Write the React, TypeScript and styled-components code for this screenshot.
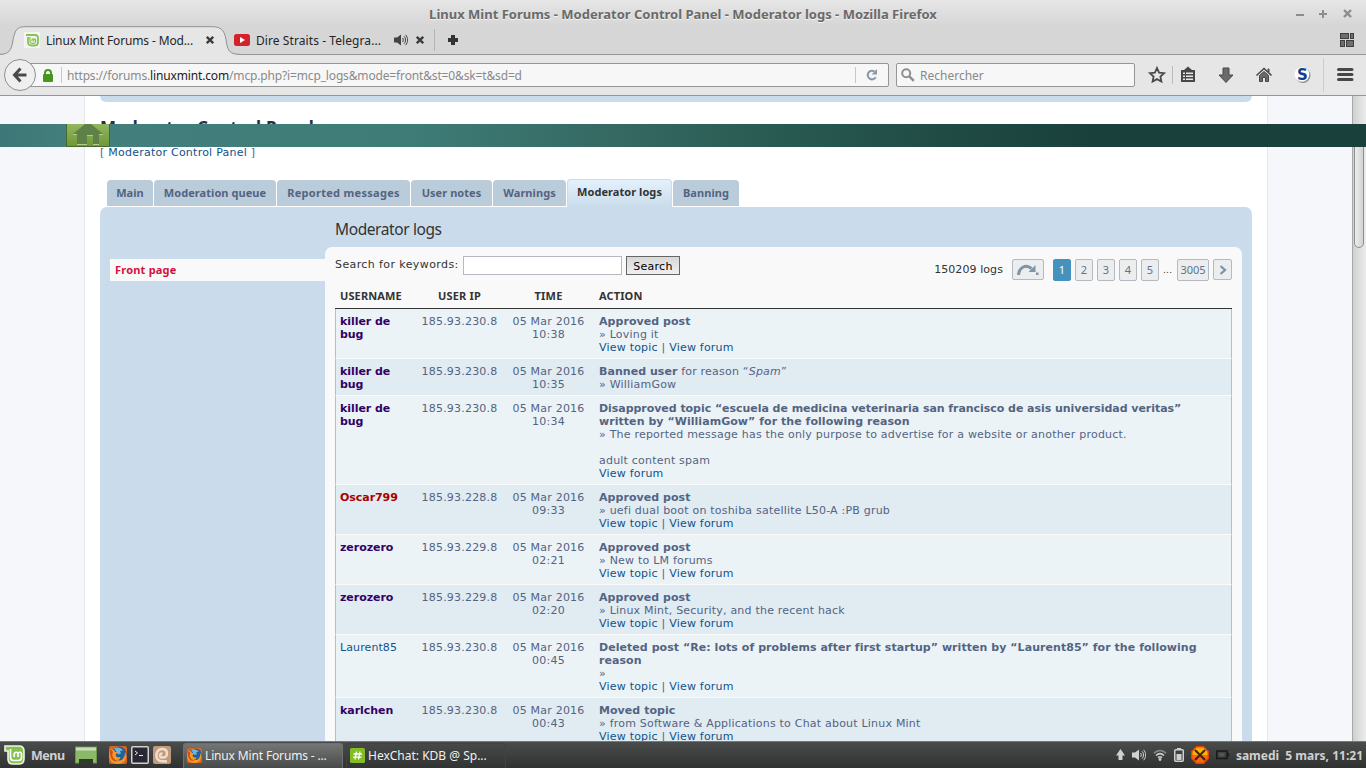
import React from "react"
import styled, { createGlobalStyle } from "styled-components"

interface LogEntry {
  user: string
  color: string
  plain?: boolean
  ip: string
  time: string
  action: React.ReactNode
}

const Link = styled.a`
  color: #105289;
`

const both = (
  <>
    <Link>View topic</Link> | <Link>View forum</Link>
  </>
)

const tabs = [
  { label: "Main", width: 46 },
  { label: "Moderation queue", width: 122 },
  { label: "Reported messages", width: 133, wide: true },
  { label: "User notes", width: 81 },
  { label: "Warnings", width: 73 },
  { label: "Moderator logs", width: 105, active: true },
  { label: "Banning", width: 66 },
]

const logs: LogEntry[] = [
  {
    user: "killer de bug", color: "#330066", ip: "185.93.230.8", time: "10:38",
    action: <><b>Approved post</b><br />» Loving it<br />{both}</>,
  },
  {
    user: "killer de bug", color: "#330066", ip: "185.93.230.8", time: "10:35",
    action: <><b>Banned user</b> for reason “<em>Spam</em>”<br />» WilliamGow</>,
  },
  {
    user: "killer de bug", color: "#330066", ip: "185.93.230.8", time: "10:34",
    action: (
      <>
        <TightBold>Disapproved topic “escuela de medicina veterinaria san francisco de asis universidad veritas”</TightBold><br />
        <b>written by “WilliamGow” for the following reason</b><br />
        » The reported message has the only purpose to advertise for a website or another product.<br />
        <br />
        adult content spam<br />
        <Link>View forum</Link>
      </>
    ),
  },
  {
    user: "Oscar799", color: "#aa0000", ip: "185.93.228.8", time: "09:33",
    action: <><b>Approved post</b><br />» uefi dual boot on toshiba satellite L50-A :PB grub<br />{both}</>,
  },
  {
    user: "zerozero", color: "#330066", ip: "185.93.229.8", time: "02:21",
    action: <><b>Approved post</b><br />» New to LM forums<br />{both}</>,
  },
  {
    user: "zerozero", color: "#330066", ip: "185.93.229.8", time: "02:20",
    action: <><b>Approved post</b><br />» Linux Mint, Security, and the recent hack<br />{both}</>,
  },
  {
    user: "Laurent85", color: "#105289", plain: true, ip: "185.93.230.8", time: "00:45",
    action: (
      <>
        <b>Deleted post “Re: lots of problems after first startup” written by “Laurent85” for the following<br />reason</b><br />
        »<br />
        {both}
      </>
    ),
  },
  {
    user: "karlchen", color: "#330066", ip: "185.93.230.8", time: "00:43",
    action: <><b>Moved topic</b><br />» from Software &amp; Applications to Chat about Linux Mint<br />{both}</>,
  },
]

// function declaration, so the log data above can use it
function TightBold({ children }: { children: React.ReactNode }) {
  return <Tight>{children}</Tight>
}

export default function App() {
  return (
    <Screen>
      <GlobalStyle />
      <TitleBar>
        <WindowTitle>Linux Mint Forums - Moderator Control Panel - Moderator logs - Mozilla Firefox</WindowTitle>
        <WindowButtons>
          <svg width="60" height="12" viewBox="0 0 60 12" fill="none" stroke="#8c8c8c" strokeWidth="2">
            <path d="M1 7h8M24 6h8M28 2v8" />
            <path d="M49 2l7 7M56 2l-7 7" strokeWidth="2.4" />
          </svg>
        </WindowButtons>
      </TitleBar>
      <BrowserTabs>
        <ActiveTab>
          <TabShape />
          <MintFavicon />
          <TabText $w={147} $tight>Linux Mint Forums - Mod...</TabText>
          <CloseIcon />
        </ActiveTab>
        <InactiveTab>
          <svg width="16" height="12" viewBox="0 0 16 12">
            <rect width="16" height="12" rx="2.5" fill="#d3222a" />
            <path d="M6 3l5 3-5 3z" fill="#fff" />
          </svg>
          <TabText $w={128}>Dire Straits - Telegra...</TabText>
          <SpeakerIcon color="#444" />
          <CloseIcon />
        </InactiveTab>
        <NewTab>
          <svg width="10" height="10" viewBox="0 0 10 10"><path d="M3 0h4v3h3v4H7v3H3V7H0V3h3z" fill="#333" /></svg>
        </NewTab>
        <TabGroups>
          <svg width="14" height="14" viewBox="0 0 14 14" fill="#6e6e6e" stroke="#3f3f3f">
            <rect x=".5" y=".5" width="8" height="5" />
            <rect x="10.5" y=".5" width="3" height="5" />
            <rect x=".5" y="7.5" width="4" height="6" />
            <rect x="6.5" y="7.5" width="7" height="6" />
          </svg>
        </TabGroups>
      </BrowserTabs>
      <NavBar>
        <BackButton>
          <svg width="16" height="16" viewBox="0 0 16 16" fill="none" stroke="#4a4a4a" strokeWidth="3">
            <path d="M8.500 1.500L2.500 8l6 6.500M3 8h11.500" />
          </svg>
        </BackButton>
        <UrlBar>
          <svg width="10" height="13" viewBox="0 0 10 13">
            <path d="M2 6V4a3 3 0 0 1 6 0v2" fill="none" stroke="#479622" strokeWidth="2" />
            <rect y="5" width="10" height="8" rx="1" fill="#479622" />
          </svg>
          <Divider />
          <Url>https://forums.<span>linuxmint.com</span>/mcp.php?i=mcp_logs&amp;mode=front&amp;st=0&amp;sk=t&amp;sd=d</Url>
          <Divider />
          <Reload>
            <svg width="12" height="12" viewBox="0 0 12 12">
              <path d="M9.700 8.300A4.300 4.300 0 1 1 8.500 2.500" fill="none" stroke="#8b99a6" strokeWidth="2.100" />
              <path d="M11 0v5.500H5.500z" fill="#8b99a6" />
            </svg>
          </Reload>
        </UrlBar>
        <SearchBar>
          <svg width="14" height="14" viewBox="0 0 14 14" fill="none" stroke="#8f8f8f">
            <circle cx="5.200" cy="5.200" r="4" strokeWidth="2" />
            <path d="M8.300 8.300l4.500 4.500" strokeWidth="2.500" />
          </svg>
          <SearchHint>Rechercher</SearchHint>
        </SearchBar>
        <Toolbar>
          <svg width="212" height="40" viewBox="0 0 212 40">
            <path d="M15 13l2.100 4.600 5 .600-3.700 3.400 1 5-4.400-2.500-4.400 2.500 1-5-3.700-3.400 5-.600z" fill="none" stroke="#4a4a4a" strokeWidth="1.800" />
            <path d="M30.500 11v18" stroke="#bcbcbc" />
            <path d="M39 15h3l4-3.500 4 3.500h3v12H39z" fill="#484848" />
            <path d="M41 17.500h2v1.500h-2zM44 17.500h7v1.500h-7zM41 20.500h2V22h-2zM44 20.500h7V22h-7zM41 23.500h2V25h-2zM44 23.500h7V25h-7z" fill="#e6e6e6" />
            <path d="M81 13h6v7h4L84 27.500 77 20h4z" fill="#6a6a6a" stroke="#484848" />
            <path d="M114.500 20.500l7.500-7 7.500 7" fill="none" stroke="#484848" strokeWidth="1.600" />
            <path d="M117.500 20.500l4.500-4 4.500 4V26.500h-3v-4h-3v4h-3zM126 14h1v3l-1-1z" fill="#6a6a6a" stroke="#484848" />
            <circle cx="161" cy="20.500" r="7.500" fill="#8d8d8d" />
            <circle cx="160" cy="19.500" r="7.300" fill="#fff" />
            <path d="M181.500 3v34" stroke="#cdcdcd" />
            <path d="M196.500 14.500h13.500M196.500 19.500h13.500M196.500 24.500h13.500" stroke="#484848" strokeWidth="3" strokeLinecap="round" />
          </svg>
          <ExtensionLetter>S</ExtensionLetter>
        </Toolbar>
      </NavBar>

      <Viewport>
        <Page>
          <PreviousPanel />
          <PageTitle>Moderator Control Panel</PageTitle>
          <Crumbs>[ <Link>Moderator Control Panel</Link> ]</Crumbs>
          <ForumTabs>
            {tabs.map(t => (
              <ForumTab key={t.label} $w={t.width} $active={t.active} $wide={t.wide}>{t.label}</ForumTab>
            ))}
          </ForumTabs>
          <Panel>
            <SideMenu>
              <SideItem>Front page</SideItem>
            </SideMenu>
            <Main>
              <PanelTitle>Moderator logs</PanelTitle>
              <Content>
                <ActionBar>
                  <Keywords>
                    <Label>Search for keywords:</Label>
                    <Input />
                    <SearchButton>Search</SearchButton>
                  </Keywords>
                  <Pagination>
                    <Total>150209 logs</Total>
                    <PageButton $w={32} $icon $gap={9}>
                      <svg width="22" height="12" viewBox="0 0 22 12">
                        <path d="M1.500 11C2 4 8.500-.500 14.500 4.500" fill="none" stroke="#7f94a6" strokeWidth="3" />
                        <path d="M18.500 1v7h-7zM19 8.500h2.500V11H19z" fill="#7f94a6" />
                      </svg>
                    </PageButton>
                    <PageButton $w={18} $current>1</PageButton>
                    <PageButton $w={18}>2</PageButton>
                    <PageButton $w={18}>3</PageButton>
                    <PageButton $w={18}>4</PageButton>
                    <PageButton $w={18}>5</PageButton>
                    <Dots>...</Dots>
                    <PageButton $w={32}>3005</PageButton>
                    <PageButton $w={19} $icon $gap={0}>
                      <svg width="8" height="10" viewBox="0 0 8 10"><path d="M1.500 1l4.500 4-4.500 4" fill="none" stroke="#7f94a6" strokeWidth="2.300" /></svg>
                    </PageButton>
                  </Pagination>
                </ActionBar>
                <Table>
                  <colgroup>
                    <col width="81" /><col width="87" /><col width="91" /><col />
                  </colgroup>
                  <thead>
                    <tr><Th>USERNAME</Th><Th $center>USER IP</Th><Th $center>TIME</Th><Th>ACTION</Th></tr>
                  </thead>
                  <tbody>
                    {logs.map((log, i) => (
                      <Row key={i} $odd={i % 2 === 0}>
                        <Td><User $color={log.color} $plain={log.plain}>{log.user}</User></Td>
                        <Td $center>{log.ip}</Td>
                        <Td $center $nowrap>05 Mar 2016<br />{log.time}</Td>
                        <Td $nowrap>{log.action}</Td>
                      </Row>
                    ))}
                  </tbody>
                </Table>
              </Content>
            </Main>
          </Panel>
        </Page>
        <Scrollbar><Thumb /></Scrollbar>
        <Banner>
          <HomeTile>
            <svg width="30" height="21" viewBox="0 0 30 21">
              <path d="M0 10L12 0h6l12 10h-4v10.500h-6V11h-6v9.500H4V10z" fill="#5e8148" />
              <path d="M0 10.500h4M26 10.500h4M14 11.500h6M4 20.500h10M20 20.500h6" stroke="#b4cb90" />
            </svg>
          </HomeTile>
        </Banner>
      </Viewport>

      <Taskbar>
        <MenuButton>
          <svg width="22" height="20" viewBox="0 0 22 20">
            <path d="M1 1h14c4 0 5 2 5 5v8c0 3-2 5-5 5H9c-4 0-5-2-5-5V6H1z" fill="#86c34e" stroke="#eef6e8" strokeWidth="1.600" />
            <path d="M6.500 4v8.500c0 2 1 3 3 3h5c2 0 3-1 3-3V9.500c0-3-3.500-3-3.500 0V12M14 9.500c0-3-3.800-3-3.800 0V12" fill="none" stroke="#fff" strokeWidth="1.700" />
          </svg>
          <MenuText>Menu</MenuText>
        </MenuButton>
        <Launchers>
          <svg width="22" height="19" viewBox="0 0 22 19">
            <rect x=".5" y="1" width="21" height="16" fill="#8bb968" stroke="#6c9650" />
            <path d="M1 1.500h20v3H1z" fill="#c9deb9" />
            <path d="M4 13h14v5H4z" fill="#2f3a29" />
          </svg>
          <FirefoxIcon size={18} />
          <svg width="18" height="18" viewBox="0 0 18 18">
            <rect x=".75" y=".75" width="16.500" height="16.500" rx="1" fill="#292733" stroke="#d0d0d0" strokeWidth="1.500" />
            <path d="M4 5l2.500 2L4 9M8 9.500h4" fill="none" stroke="#eee" />
          </svg>
          <svg width="18" height="18" viewBox="0 0 18 18">
            <rect width="18" height="18" rx="2" fill="#c09a79" />
            <path d="M14 15.500L7 15C1 12 3 3 9.500 3c5.500 0 6 8 1 8.500C6 12 6 7 9.500 7.500" fill="none" stroke="#f0dccb" strokeWidth="2.600" />
          </svg>
        </Launchers>
        <Task $active>
          <FirefoxIcon size={15} />
          <TaskText $tight>Linux Mint Forums - ...</TaskText>
        </Task>
        <Task>
          <svg width="15" height="15" viewBox="0 0 15 15">
            <rect width="15" height="15" rx="1.500" fill="#83bd24" />
            <path d="M6.500 3.500l-1.500 8M10 3.500l-1.500 8M3.500 6h8.500M3 9.200h8.500" stroke="#fff" strokeWidth="1.300" />
          </svg>
          <TaskText>HexChat: KDB @ Sp...</TaskText>
        </Task>
        <Tray>
          <svg width="9" height="12" viewBox="0 0 9 12"><path d="M4.500 0L9 6.500H6.500V11h-4V6.500H0z" fill="#d0d0d0" /></svg>
          <SpeakerIcon color="#d0d0d0" />
          <svg width="14" height="12" viewBox="0 0 14 12" fill="none" stroke="#cfcfcf" strokeWidth="1.500">
            <path d="M1 4.200C4.500.500 9.500.500 13 4.200" stroke="#8c8c8c" />
            <path d="M3 6.500c2.500-2.500 5.500-2.500 8 0M5 8.700c1.200-1.200 2.800-1.200 4 0" />
            <circle cx="7" cy="10.500" r=".7" fill="#cfcfcf" />
          </svg>
          <svg width="10" height="14" viewBox="0 0 10 14">
            <path d="M3 0h4v2H3z" fill="#d0d0d0" /><rect x=".75" y="1.750" width="8.500" height="11.500" rx="1" fill="none" stroke="#d0d0d0" strokeWidth="1.500" />
            <path d="M2.500 6h5v6h-5z" fill="#d0d0d0" />
          </svg>
          <svg width="18" height="18" viewBox="0 0 18 18">
            <path d="M5.500.8h7L17.200 5.500v7l-4.700 4.700h-7L.8 12.500v-7z" fill="#f7b500" />
            <path d="M1 9h16v3.500l-4.500 4.700h-7L1 12.500z" fill="#f26a12" />
            <path d="M5.500.8h7L17.200 5.500v7l-4.700 4.700h-7L.8 12.500v-7z" fill="none" stroke="#e8420d" strokeWidth="1.400" />
            <path d="M4 4l10 10M14 4L4 14" stroke="#4a1a0c" strokeWidth="2" />
          </svg>
          <svg width="13" height="10" viewBox="0 0 13 10">
            <path d="M.7 1h10.300v7.500H.7zM12.500 3v3.500" fill="none" stroke="#191919" strokeWidth="1.400" /><path d="M3 3h5.500v3.500H3z" fill="#555" />
          </svg>
          <Clock>samedi&nbsp; 5 mars, 11:21</Clock>
        </Tray>
      </Taskbar>
    </Screen>
  )
}

function TabShape() {
  return (
    <Shape width="244" height="29" viewBox="0 0 244 29">
      <path d="M0 28.500C9 28.500 11 24 12.500 17C14.500 6 15.500.700 25 .700H212C223 .700 225 6 226.500 17C228 25 230 28.500 240 28.500V29H0z" fill="#e6e6e6" />
      <path d="M0 28.300C9 28.300 11 24 12.500 17C14.500 6 15.500.700 25 .700H212C223 .700 225 6 226.500 17C228 25 230 28.300 240 28.300" fill="none" stroke="#8f9397" />
    </Shape>
  )
}

function MintFavicon() {
  return (
    <svg width="16" height="16" viewBox="0 0 16 16">
      <rect width="16" height="16" fill="#f4f4f4" />
      <path d="M2 3h9c2 0 3 1 3 3v4c0 2-1 3.500-3 3.500H7.500C5 13.500 4 12 4 10V5" fill="none" stroke="#86c34e" strokeWidth="1.800" />
      <path d="M6 5v4.500c0 1.300.6 1.800 1.800 1.800h2c1.200 0 1.800-.6 1.800-1.800V8c0-1.500-1.800-1.500-1.800 0v1.500M9.800 8C9.800 6.500 8 6.500 8 8v1.500" fill="none" stroke="#86c34e" strokeWidth="1.200" />
    </svg>
  )
}

function CloseIcon() {
  return (
    <svg width="8" height="8" viewBox="0 0 8 8"><path d="M.8.800l6.400 6.400M7.200.800L.8 7.200" stroke="#3c3c3c" strokeWidth="2.300" /></svg>
  )
}

function SpeakerIcon({ color }: { color: string }) {
  return (
    <svg width="14" height="12" viewBox="0 0 14 12">
      <path d="M0 3.500h3L7 .500v11L3 8.500H0z" fill={color} />
      <path d="M8.500 4c1 1 1 3 0 4M10 2.300c2 2 2 5.400 0 7.400M11.600.800c2.700 3 2.700 7.400 0 10.400" fill="none" stroke={color} />
    </svg>
  )
}

function FirefoxIcon({ size }: { size: number }) {
  return (
    <svg width={size} height={size} viewBox="0 0 18 18">
      <rect width="18" height="18" rx="2" fill="#d9651a" />
      <circle cx="10" cy="8" r="7.500" fill="#245f9c" />
      <path d="M5 2c3-1.500 8 0 9 2.500l-3 .5 1 2.500-3 1z" fill="#6eb5dc" />
      <path d="M1 2c1 2 2 1 4 2l1 2h3L7 8c-1 3 2 4 4 3 1 2-1 3-3 3 5 2 8-2 8-8 3 6-1 12-7 12S0 14 0 9z" fill="#f59a24" />
      <path d="M1 3c1 1 2 1 3 3-2 4 1 8 5 9-5 2-9-3-8-12z" fill="#d94b16" />
    </svg>
  )
}

const GlobalStyle = createGlobalStyle`
  * { box-sizing: border-box; }
  body { margin: 0; overflow: hidden; }
  svg { display: block; flex: none; }
`

const Screen = styled.div`
  width: 1366px;
  height: 768px;
  display: flex;
  flex-direction: column;
  overflow: hidden;
  font-family: "Noto Sans", "Open Sans", sans-serif;
  background: #f5f7fa;
`

const TitleBar = styled.header`
  height: 26px;
  flex: none;
  display: grid;
  grid-template-columns: 1fr auto 1fr;
  align-items: center;
  padding-top: 2px;
  background: linear-gradient(#e6e6e6, #d6d6d6);
`

const WindowTitle = styled.div`
  grid-column: 2;
  font-size: 13px;
  font-weight: 700;
  color: #6a6a6a;
  text-shadow: 0 1px #f2f2f2;
  white-space: nowrap;
`

const WindowButtons = styled.div`
  justify-self: end;
  margin-right: 11px;
`

const BrowserTabs = styled.div`
  height: 29px;
  flex: none;
  display: flex;
  align-items: center;
  background: #d6d6d6;
  border-bottom: 1px solid #969696;
`

const ActiveTab = styled.div`
  position: relative;
  width: 228px;
  height: 29px;
  display: flex;
  align-items: center;
  gap: 6px;
  padding-left: 24px;
  z-index: 1;

  > svg:last-child {
    margin-left: 7px;
  }
`

const Shape = styled.svg`
  position: absolute;
  left: 0;
  top: 0;
  z-index: -1;
`

const InactiveTab = styled.div`
  width: 207px;
  height: 22px;
  display: flex;
  align-items: center;
  gap: 6px;
  padding-left: 6px;
  border-right: 1px solid #b4b4b4;
  z-index: 2;

  > svg:nth-of-type(2) {
    margin-left: 4px;
  }

  > svg:last-child {
    margin-left: 2px;
  }
`

const TabText = styled.span<{ $w: number; $tight?: boolean }>`
  width: ${p => p.$w}px;
  flex: none;
  font-size: 12px;
  letter-spacing: ${p => (p.$tight ? -0.14 : 0.08)}px;
  color: #252525;
  white-space: nowrap;
`

const NewTab = styled.div`
  margin-left: 13px;
`

const TabGroups = styled.div`
  margin: 0 12px 1px auto;
`

const NavBar = styled.div`
  height: 41px;
  flex: none;
  display: flex;
  align-items: center;
  background: #e6e6e6;
  border-bottom: 1px solid #969696;
`

const BackButton = styled.div`
  width: 32px;
  height: 32px;
  flex: none;
  display: flex;
  align-items: center;
  justify-content: center;
  margin-left: 4px;
  border: 1px solid #8f8f8f;
  border-radius: 50%;
  background: #efefef;
  z-index: 1;
`

const UrlBar = styled.div`
  width: 861px;
  height: 24px;
  flex: none;
  display: flex;
  align-items: center;
  margin-left: -8px;
  padding-left: 14px;
  border: 1px solid #969696;
  border-radius: 2px;
  background: #f7f7f7;

  > svg {
    margin-right: 8px;
  }
`

const Divider = styled.i`
  width: 1px;
  height: 16px;
  background: #c8c8c8;
`

const Url = styled.div`
  flex: 1;
  padding-left: 5px;
  font-size: 12px;
  letter-spacing: -0.15px;
  color: #8a8a8a;
  white-space: nowrap;

  span {
    color: #222;
  }
`

const Reload = styled.div`
  width: 32px;
  padding-left: 10px;
`

const SearchBar = styled.div`
  width: 239px;
  height: 24px;
  flex: none;
  display: flex;
  align-items: center;
  gap: 5px;
  margin-left: 7px;
  padding-left: 4px;
  border: 1px solid #969696;
  border-radius: 2px;
  background: #f7f7f7;
`

const SearchHint = styled.span`
  font-size: 12px;
  color: #888;
`

const Toolbar = styled.div`
  position: relative;
  margin-left: 7px;
`

const ExtensionLetter = styled.span`
  position: absolute;
  left: 155px;
  top: 11px;
  width: 12px;
  font: 700 15px/18px "DejaVu Sans", sans-serif;
  color: #123f8f;
`

const Viewport = styled.main`
  position: relative;
  height: 645px;
  flex: none;
  display: flex;
  overflow: hidden;
  font: 11px/13px Verdana, "DejaVu Sans", sans-serif;
  letter-spacing: 0.21px;
  color: #536482;

  b {
    letter-spacing: 0.05px;
  }
`

const Tight = styled.strong`
  letter-spacing: -0.045px;
`

const Page = styled.div`
  width: 1184px;
  height: 645px;
  flex: none;
  margin-left: 84px;
  padding: 0 15px;
  border: solid #e6e9ed;
  border-width: 0 1px;
  background: #fff;
`

const PreviousPanel = styled.div`
  height: 6px;
  border-radius: 0 0 7px 7px;
  background: #cadceb;
`

const PageTitle = styled.h2`
  height: 20px;
  margin: 16px 0 0;
  font: 700 17px/20px "Trebuchet MS", "Noto Sans", sans-serif;
  letter-spacing: 0.2px;
  color: #28313f;
`

const Crumbs = styled.p`
  margin: 8px 0 0;
  letter-spacing: 0.24px;
`

const ForumTabs = styled.nav`
  height: 28px;
  display: flex;
  align-items: flex-start;
  gap: 1px;
  margin: 20px 0 0 7px;
`

const ForumTab = styled.a<{ $w: number; $active?: boolean; $wide?: boolean }>`
  width: ${p => p.$w}px;
  height: ${p => (p.$active ? 28 : 26)}px;
  margin-top: ${p => (p.$active ? 0 : 1)}px;
  border: ${p => (p.$active ? "1px solid #cadceb" : "0")};
  border-bottom: 0;
  border-radius: 4px 4px 0 0;
  background: ${p => (p.$active ? "linear-gradient(#e3f1fc, #cadceb)" : "#bacbd9")};
  color: ${p => (p.$active ? "#333" : "#536482")};
  font: 700 11px/${p => (p.$active ? 24 : 26)}px "Noto Sans", sans-serif;
  letter-spacing: ${p => (p.$wide ? 0.3 : 0.06)}px;
  text-align: center;
  white-space: nowrap;
`

const Panel = styled.section`
  height: 600px;
  display: flex;
  padding-right: 10px;
  border-radius: 7px;
  background: #cadceb;
`

const SideMenu = styled.aside`
  width: 225px;
  flex: none;
  padding: 52px 0 0 10px;
`

const SideItem = styled.a`
  display: block;
  height: 22px;
  padding-left: 5px;
  background: #f9f9f9;
  font: 700 11px/22px "Noto Sans", sans-serif;
  color: #d31141;
`

const Main = styled.div`
  flex: 1;
`

const PanelTitle = styled.h3`
  height: 40px;
  margin: 0;
  padding: 12px 0 0 10px;
  font: 400 15.5px/20px "Noto Sans", sans-serif;
  letter-spacing: -0.4px;
  color: #333;
`

const Content = styled.div`
  height: 560px;
  padding: 0 10px;
  border-radius: 7px 7px 0 0;
  background: #f9f9f9;
`

const ActionBar = styled.div`
  height: 37px;
  display: flex;
  justify-content: space-between;
`

const Keywords = styled.div`
  display: flex;
  padding-top: 9px;
  color: #333;
`

const Label = styled.label`
  width: 128px;
  padding-top: 2px;
  letter-spacing: 0.4px;
  white-space: nowrap;
`

const Input = styled.input`
  width: 159px;
  height: 19px;
  margin-right: 4px;
  border: 1px solid #b4bac0;
  background: #fff;
`

const SearchButton = styled.button`
  width: 54px;
  height: 19px;
  padding: 1px 0 0;
  border: 1px solid #666;
  background: linear-gradient(#d8d8d8, #efefef);
  font: 11px/15px "DejaVu Sans", sans-serif;
  letter-spacing: 0.25px;
  color: #000;
`

const Pagination = styled.div`
  display: flex;
  padding-top: 12px;
  color: #333;
`

const Total = styled.span`
  margin: 4px 9px 0 0;
  letter-spacing: 0.08px;
`

const PageButton = styled.a<{ $w: number; $current?: boolean; $icon?: boolean; $gap?: number }>`
  width: ${p => p.$w}px;
  height: ${p => (p.$icon ? 21 : 22)}px;
  display: flex;
  align-items: center;
  justify-content: center;
  margin-right: ${p => p.$gap ?? 4}px;
  border: 1px solid ${p => (p.$current ? "#4692bf" : "#b4bac0")};
  border-radius: 2px;
  background: ${p => (p.$current ? "#4692bf" : "#ecedee")};
  color: ${p => (p.$current ? "#fff" : "#5c758c")};
  font: 11px/20px "Noto Sans", sans-serif;
  letter-spacing: 0;
`

const Dots = styled.span`
  width: 10px;
  margin: 5px 4px 0 0;
  font-size: 9px;
`

const Table = styled.table`
  width: 897px;
  table-layout: fixed;
  border-spacing: 0;
  border-collapse: separate;
`

const Th = styled.th<{ $center?: boolean }>`
  height: 25px;
  padding: 0 5px;
  border-bottom: 1px solid #333;
  font: 700 11px/24px "Noto Sans", sans-serif;
  color: #333;
  text-align: ${p => (p.$center ? "center" : "left")};

  &:first-child,
  &:last-child {
    letter-spacing: 0.12px;
  }
`

const Row = styled.tr<{ $odd: boolean }>`
  background: ${p => (p.$odd ? "#ecf3f7" : "#e1ebf2")};
`

const Td = styled.td<{ $center?: boolean; $nowrap?: boolean }>`
  padding: 6px 5px 4px;
  border-bottom: 1px solid #fafafa;
  vertical-align: top;
  text-align: ${p => (p.$center ? "center" : "left")};
  white-space: ${p => (p.$nowrap ? "nowrap" : "normal")};

  &:first-child {
    padding-left: 4px;
    border-left: 1px solid #b8bec8;
  }

  &:last-child {
    border-right: 1px solid #b8bec8;
  }
`

const User = styled.a<{ $color: string; $plain?: boolean }>`
  color: ${p => p.$color};
  font-weight: ${p => (p.$plain ? 400 : 700)};
  letter-spacing: ${p => (p.$plain ? 0.1 : -0.05)}px;
`

const Scrollbar = styled.div`
  width: 14px;
  margin-left: auto;
  border-left: 1px solid #a8a8a8;
  background: linear-gradient(90deg, #d0d0d0, #ececec);
`

const Thumb = styled.div`
  width: 10px;
  height: 121px;
  margin: 31px 0 0 1px;
  border: 1px solid #8e8e8e;
  border-radius: 5px;
  background: linear-gradient(90deg, #ededed, #d2d2d2);
`

const Banner = styled.div`
  position: absolute;
  left: 0;
  top: 28px;
  width: 100%;
  height: 23px;
  background: linear-gradient(90deg, #3d7777 0, #437f7d 5%, #3f7c77 30%, #356962 45%, #285950 58%, #1f4a43 70%, #1a403b 80%, #1a403b 100%);
`

const HomeTile = styled.div`
  width: 44px;
  height: 23px;
  display: flex;
  justify-content: center;
  margin-left: 66px;
  border: solid #47672f;
  border-width: 0 1px 1px;
  background: linear-gradient(#92b65f, #6f9938);
`

const Taskbar = styled.footer`
  height: 27px;
  flex: none;
  display: flex;
  align-items: center;
  border-top: 1px solid #777;
  background: linear-gradient(#4a4c4c, #303232);
  color: #e0e0e0;
`

const MenuButton = styled.div`
  width: 75px;
  display: flex;
  align-items: center;
  gap: 5px;
  padding-left: 4px;
`

const MenuText = styled.span`
  font-size: 12.5px;
  font-weight: 700;
  letter-spacing: -0.5px;
  color: #d0d0d0;
`

const Launchers = styled.div`
  width: 108px;
  display: flex;
  align-items: center;
  gap: 4px;

  > svg:first-child {
    margin-right: 8px;
  }
`

const Task = styled.div<{ $active?: boolean }>`
  width: 160px;
  height: 25px;
  display: flex;
  align-items: center;
  gap: 3px;
  margin-right: 3px;
  padding-left: 3px;
  border-radius: 3px 3px 0 0;
  border: 1px solid ${p => (p.$active ? "#6f7171" : "#414343")};
  border-bottom: 0;
  background: ${p => (p.$active ? "linear-gradient(#747676, #484a4a)" : "linear-gradient(#474949, #323434)")};
`

const TaskText = styled.span<{ $tight?: boolean }>`
  font-size: 12px;
  letter-spacing: ${p => (p.$tight ? -0.15 : 0)}px;
  color: #f0f0f0;
  white-space: nowrap;
`

const Tray = styled.div`
  display: flex;
  align-items: center;
  gap: 7px;
  margin: 0 3px 0 auto;
`

const Clock = styled.span`
  font-size: 12px;
  font-weight: 700;
  color: #d0d0d0;
  white-space: nowrap;
`
